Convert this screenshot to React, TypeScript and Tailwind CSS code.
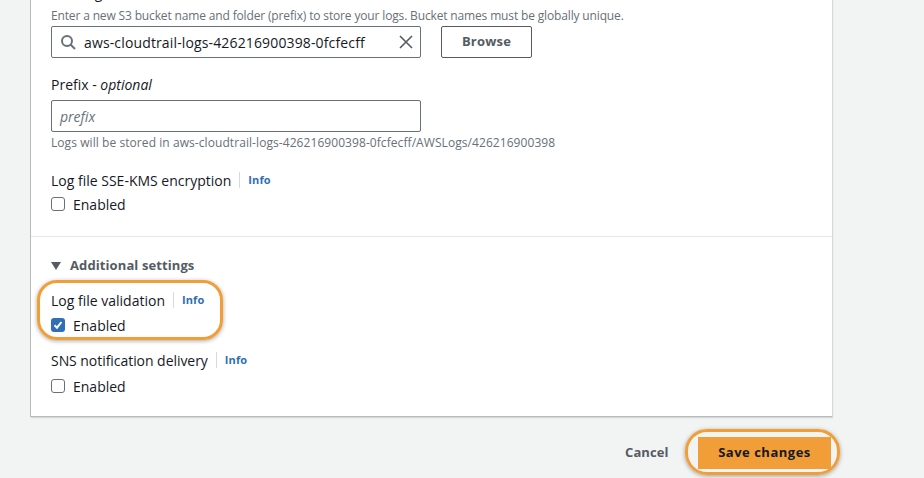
import React from "react";

function Info() {
  return (
    <span className="ml-[8px] border-l border-[#d5dbdb] pl-[8px] text-[11px] leading-[16px] font-bold tracking-[0.1px] text-[#2f6fb3]">Info</span>
  );
}

function Check({ checked }: { checked?: boolean }) {
  return (
    <label className="flex items-center h-[20px] text-[14px] text-[#16191f]">
      {checked ? (
        <span className="w-[14px] h-[14px] rounded-[3px] bg-[#2f6fb3] flex items-center justify-center">
          <svg width="12" height="12" viewBox="0 0 12 12" fill="none">
            <path d="M2.5 6.2 L5 8.7 L9.5 3" stroke="#fff" strokeWidth="2" />
          </svg>
        </span>
      ) : (
        <span className="w-[14px] h-[14px] rounded-[3px] border border-[#687078] bg-white" />
      )}
      <span className="ml-[8px]">Enabled</span>
    </label>
  );
}

export default function App() {
  return (
    <div className="relative w-[924px] h-[478px] overflow-hidden bg-[#f2f3f3] font-['Open_Sans','Noto_Sans',sans-serif]">
      <div className="-mt-[16px] ml-[30px] w-[802px] h-[433px] bg-white border-l border-b border-[#b6bbbb] shadow-[1px_1px_1px_#d5d8d8] flex flex-col">
        <div className="px-[20px]">
          <div className="h-[18px] text-[14px] leading-[18px] text-[#16191f]">Trail log bucket and folder</div>
          <div className="mt-[6px] h-[16px] text-[12px] leading-[16px] tracking-[-0.15px] text-[#687078] whitespace-nowrap">
            Enter a new S3 bucket name and folder (prefix) to store your logs. Bucket names must be globally unique.
          </div>
          <div className="mt-[2px] flex gap-[20px]">
            <div className="w-[370px] h-[32px] rounded-[2px] border border-[#687078] flex items-center pl-[8px] pr-[7px]">
              <svg width="16" height="16" viewBox="0 0 16 16" fill="none" stroke="#687078" strokeWidth="2">
                <circle cx="7" cy="7" r="5" />
                <path d="M10.5 10.5 L15 15" />
              </svg>
              <span className="ml-[8px] flex-1 text-[14px] tracking-[0.14px] text-[#16191f] whitespace-nowrap">aws-cloudtrail-logs-426216900398-0fcfecff</span>
              <svg width="14" height="14" viewBox="0 0 14 14" fill="none" stroke="#545b64" strokeWidth="1.6">
                <path d="M1 1 L13 13 M13 1 L1 13" />
              </svg>
            </div>
            <div className="w-[91px] h-[32px] rounded-[2px] border border-[#545b64] flex items-center justify-center text-[13px] font-bold tracking-[0.2px] text-[#545b64]">Browse</div>
          </div>
          <div className="mt-[17px] h-[20px] text-[14px] leading-[20px] text-[#16191f]">
            Prefix - <i>optional</i>
          </div>
          <div className="mt-[5px] w-[370px] h-[32px] rounded-[2px] border border-[#687078] flex items-center pl-[8px] text-[14px] italic text-[#687078]">prefix</div>
          <div className="mt-[3px] h-[16px] text-[12px] leading-[16px] tracking-[0.07px] text-[#687078] whitespace-nowrap">
            Logs will be stored in aws-cloudtrail-logs-426216900398-0fcfecff/AWSLogs/426216900398
          </div>
          <div className="mt-[19px] h-[20px] flex items-center text-[14px] text-[#16191f]">
            Log file SSE-KMS encryption<Info />
          </div>
          <div className="mt-[4px]"><Check /></div>
        </div>
        <div className="mt-[22px] border-t border-[#e6e8e8] px-[20px] pt-[20px]">
          <div className="h-[18px] flex items-center text-[13px] font-bold tracking-[0.1px] text-[#545b64]">
            <svg width="10" height="8" viewBox="0 0 10 8" fill="#545b64"><path d="M0 0 H10 L5 8 Z" /></svg>
            <span className="ml-[9px]">Additional settings</span>
          </div>
          <div className="mt-[15px] h-[20px] flex items-center text-[14px] text-[#16191f]">
            Log file validation<Info />
          </div>
          <div className="mt-[5px]"><Check checked /></div>
          <div className="mt-[15px] h-[20px] flex items-center text-[14px] tracking-[-0.05px] text-[#16191f]">
            SNS notification delivery<Info />
          </div>
          <div className="mt-[6px]"><Check /></div>
        </div>
      </div>
      <div className="mt-[20px] ml-[625px] w-[206px] flex items-center">
        <span className="text-[13px] font-bold tracking-[0.1px] text-[#545b64]">Cancel</span>
        <div className="ml-auto w-[133px] h-[32px] bg-[#f19e38] flex items-center justify-center text-[13px] font-bold tracking-[0.5px] text-[#16191f]">Save changes</div>
      </div>
      <div className="absolute left-[37px] top-[280px] w-[186px] h-[60px] rounded-[20px] border-[3px] border-[#f19e38] shadow-[0_1px_4px_rgba(0,0,0,0.35)]" />
      <div className="absolute left-[685px] top-[429px] w-[155px] h-[46px] rounded-[22px] border-[3px] border-[#f19e38] shadow-[0_1px_4px_rgba(0,0,0,0.35)]" />
    </div>
  );
}
